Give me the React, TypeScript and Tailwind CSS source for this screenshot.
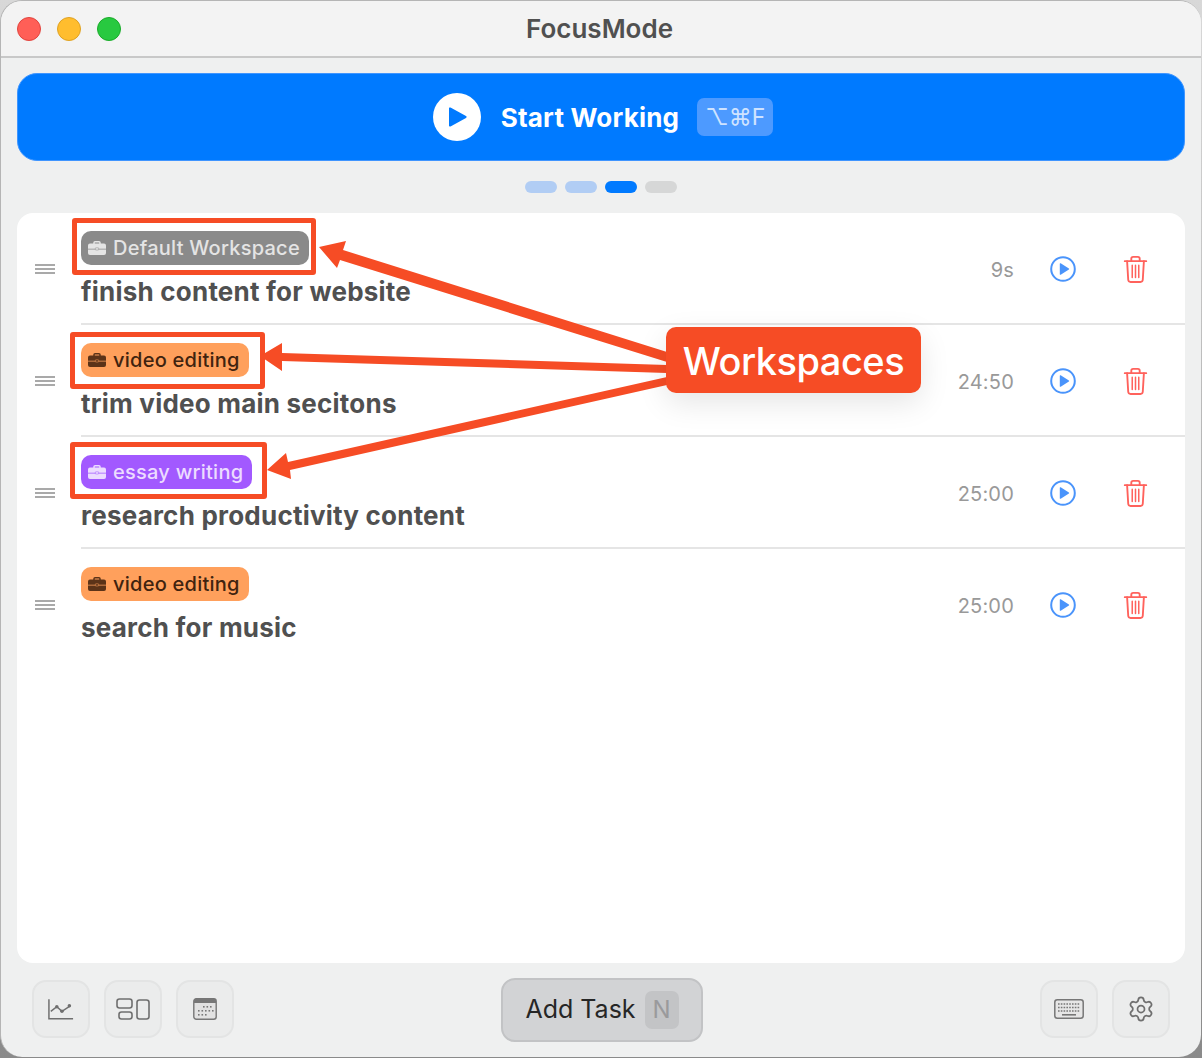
import React from "react";
import { Settings } from "lucide-react";

function Brief({ color, cut }: { color: string; cut: string }) {
  return (
    <svg width="18" height="14" viewBox="0 0 18 14" className="shrink-0">
      <path d="M6 3V1.8a1 1 0 0 1 1-1h4a1 1 0 0 1 1 1V3" fill="none" stroke={color} strokeWidth="1.5" />
      <path d="M2 2.6h14a2 2 0 0 1 2 2v3.2H0V4.6a2 2 0 0 1 2-2z" fill={color} />
      <path d="M0 8.4h18V12a2 2 0 0 1-2 2H2a2 2 0 0 1-2-2z" fill={color} />
      <rect x="7.4" y="6.8" width="3.2" height="2.2" rx="0.4" fill={color} stroke={cut} strokeWidth="0.5" />
    </svg>
  );
}

function Trash() {
  return (
    <svg width="25" height="28" viewBox="0 0 26 30" fill="none" stroke="#ff625c" strokeWidth="2" strokeLinecap="round" strokeLinejoin="round">
      <path d="M1.5 5.5h23" />
      <path d="M8.5 5V3a2 2 0 0 1 2-2h5a2 2 0 0 1 2 2v2" />
      <path d="M4 5.5l1.2 20a2.5 2.5 0 0 0 2.5 2.3h10.6a2.5 2.5 0 0 0 2.5-2.3l1.2-20" />
      <path d="M9.5 10v13M13 10v13M16.5 10v13" strokeWidth="1.6" />
    </svg>
  );
}

function RowPlay() {
  return (
    <svg width="26" height="26" viewBox="0 0 26 26">
      <circle cx="13" cy="13" r="11.8" fill="none" stroke="#4a94fb" strokeWidth="2" />
      <path d="M9.8 7.8v10.4a.6.6 0 0 0 .9.5l8.2-5.2a.6.6 0 0 0 0-1l-8.2-5.2a.6.6 0 0 0-.9.5z" fill="#4a94fb" />
    </svg>
  );
}

function Grip() {
  return (
    <div className="flex w-[20px] flex-col gap-[2px]">
      <div className="h-[2px] bg-[#a9a9a9]" />
      <div className="h-[2px] bg-[#a9a9a9]" />
      <div className="h-[2px] bg-[#a9a9a9]" />
    </div>
  );
}

const rows = [
  { tag: "Default Workspace", bg: "bg-[#8a8a8a]", fg: "text-[#e4e4e4]", ic: "#e4e4e4", cut: "#8a8a8a", title: "finish content for website", time: "9s" },
  { tag: "video editing", bg: "bg-[#ffa05c]", fg: "text-[#40230f]", ic: "#5c3318", cut: "#ffa05c", title: "trim video main secitons", time: "24:50" },
  { tag: "essay writing", bg: "bg-[#a259ff]", fg: "text-[#ecdcff]", ic: "#ecdcff", cut: "#a259ff", title: "research productivity content", time: "25:00" },
  { tag: "video editing", bg: "bg-[#ffa05c]", fg: "text-[#40230f]", ic: "#5c3318", cut: "#ffa05c", title: "search for music", time: "25:00" },
];

function Tool({ children }: { children: React.ReactNode }) {
  return (
    <div className="flex h-[58px] w-[58px] items-center justify-center rounded-[14px] border-2 border-[#e3e4e4] bg-[#ebecec]">
      {children}
    </div>
  );
}

export default function App() {
  return (
    <div className="relative h-[1058px] w-[1202px] overflow-hidden bg-linear-to-b from-[#d8d8d8] to-[#8a8a8a] font-['Inter',sans-serif]">
      <div className="flex h-[1057px] w-[1201px] flex-col overflow-hidden rounded-[22px] border border-[#b5b5b5] border-b-0 border-r-0 bg-[#eff0f0]">
        <div className="flex h-[57px] shrink-0 items-center border-b-2 border-[#c8c8c8] bg-[#f3f3f3] pl-[16px]">
          <div className="flex gap-[16px]">
            <div className="h-[24px] w-[24px] rounded-full border border-[#e0443e] bg-[#ff5f57]" />
            <div className="h-[24px] w-[24px] rounded-full border border-[#dea123] bg-[#ffbd2e]" />
            <div className="h-[24px] w-[24px] rounded-full border border-[#1aab29] bg-[#28c940]" />
          </div>
          <div className="ml-[405px] text-[26px] font-semibold text-[#505050]">FocusMode</div>
        </div>

        <div className="mx-[16px] mt-[15px] flex h-[88px] shrink-0 items-center justify-center rounded-[20px] border border-[#3f95ff] bg-[#007aff] pl-[4px]">
          <div className="flex h-[48px] w-[48px] items-center justify-center rounded-full bg-white">
            <svg width="18" height="20" viewBox="0 0 18 20" className="ml-[2px]">
              <path d="M0 1.5v17a1 1 0 0 0 1.5.9l15.5-8.5a1 1 0 0 0 0-1.8L1.5.6A1 1 0 0 0 0 1.5z" fill="#007aff" />
            </svg>
          </div>
          <div className="ml-[20px] pt-[2px] text-[26px] font-bold leading-none tracking-[0.2px] text-white">Start Working</div>
          <div className="ml-[18px] flex h-[38px] w-[76px] items-center justify-center rounded-[7px] bg-[#4d9aff] text-[23px] leading-none text-[#cfe3ff]">⌥⌘F</div>
        </div>

        <div className="mt-[20px] flex shrink-0 justify-center gap-[8px] pr-[1px]">
          <div className="h-[12px] w-[32px] rounded-full bg-[#b1cdf4]" />
          <div className="h-[12px] w-[32px] rounded-full bg-[#b1cdf4]" />
          <div className="h-[12px] w-[32px] rounded-full bg-[#007aff]" />
          <div className="h-[12px] w-[32px] rounded-full bg-[#d6d7d7]" />
        </div>

        <div className="mx-[16px] mt-[20px] h-[750px] shrink-0 rounded-[16px] bg-white">
          {rows.map((r, i) => (
            <div key={i} className="flex h-[112px] items-center">
              <div className="flex w-[64px] shrink-0 justify-center pr-[8px]">
                <Grip />
              </div>
              <div className={`flex h-[112px] flex-1 items-center border-b-2 ${i < 3 ? "border-[#e5e5e5]" : "border-transparent"}`}>
                <div className="flex-1 pt-[4px]">
                  <div className={`flex h-[34px] w-fit items-center gap-[7px] rounded-[10px] pl-[7px] pr-[9px] text-[20px] font-medium leading-none tracking-[0.25px] ${r.bg} ${r.fg}`}>
                    <Brief color={r.ic} cut={r.cut} />
                    <span>{r.tag}</span>
                  </div>
                  <div className="mt-[9px] text-[26px] font-bold leading-[36px] tracking-[0.22px] text-[#505050]">{r.title}</div>
                </div>
                <div className="w-[100px] pt-[3px] text-right text-[20px] tracking-[0.2px] text-[#999999]">{r.time}</div>
                <div className="ml-[36px] flex w-[26px] justify-center pt-[2px]"><RowPlay /></div>
                <div className="ml-[46px] mr-[37px] flex w-[26px] justify-center pt-[4px]"><Trash /></div>
              </div>
            </div>
          ))}
        </div>

        <div className="mx-[31px] mt-[15px] flex shrink-0 items-start justify-between">
          <div className="flex gap-[14px] pt-[2px]">
            <Tool>
              <svg width="26" height="23" viewBox="0 0 28 24" fill="none" stroke="#6f6f6f" strokeWidth="1.6">
                <path d="M1 1v21h26" />
                <path d="M3 14l6.5-5 5.5 5 9-6" />
                <circle cx="9.5" cy="9" r="1.9" fill="#6f6f6f" stroke="none" />
                <circle cx="15" cy="14" r="1.9" fill="#6f6f6f" stroke="none" />
                <circle cx="23" cy="8" r="1.9" fill="#6f6f6f" stroke="none" />
              </svg>
            </Tool>
            <Tool>
              <svg width="34" height="22" viewBox="0 0 34 22" fill="none" stroke="#6f6f6f" strokeWidth="1.6">
                <rect x="1" y="1" width="15" height="9" rx="2.5" />
                <rect x="3" y="14" width="13" height="7" rx="2.5" />
                <rect x="21" y="2" width="12" height="19" rx="2.5" />
              </svg>
            </Tool>
            <Tool>
              <svg width="24" height="22" viewBox="0 0 24 22">
                <rect x="0.8" y="0.8" width="22.4" height="20.4" rx="2.5" fill="#e2e2e2" stroke="#777" strokeWidth="1.4" />
                <path d="M1 3a2.5 2.5 0 0 1 2.5-2.5h17A2.5 2.5 0 0 1 23 3v2H1z" fill="#777" />
                <g fill="#777">
                  <rect x="10" y="8" width="1.6" height="1.6" /><rect x="13.5" y="8" width="1.6" height="1.6" /><rect x="17" y="8" width="1.6" height="1.6" />
                  <rect x="5" y="12" width="1.6" height="1.6" /><rect x="8.5" y="12" width="1.6" height="1.6" /><rect x="12" y="12" width="1.6" height="1.6" /><rect x="15.5" y="12" width="1.6" height="1.6" /><rect x="19" y="12" width="1.6" height="1.6" />
                  <rect x="5" y="16" width="1.6" height="1.6" /><rect x="8.5" y="16" width="1.6" height="1.6" /><rect x="12" y="16" width="1.6" height="1.6" />
                </g>
              </svg>
            </Tool>
          </div>
          <div className="ml-[-70px] flex h-[64px] w-[202px] items-center justify-center gap-[9px] rounded-[14px] border-2 border-[#c2c3c5] bg-[#d2d3d5] text-[25px] text-[#262626]">
            <span>Add Task</span>
            <span className="flex h-[38px] w-[34px] items-center justify-center rounded-[7px] bg-[#c3c4c6] text-[24px] text-[#9a9a9c]">N</span>
          </div>
          <div className="flex gap-[14px] pt-[2px]">
            <Tool>
              <svg width="30" height="20" viewBox="0 0 30 20">
                <rect x="0.8" y="0.8" width="28.4" height="18.4" rx="2.5" fill="#e6e6e6" stroke="#777" strokeWidth="1.5" />
                <g stroke="#777" strokeWidth="1.6" strokeDasharray="1.6 1.2">
                  <path d="M4 5h22M4 8.5h22M4 12h22" />
                </g>
                <path d="M8 15.8h14" stroke="#777" strokeWidth="1.6" />
              </svg>
            </Tool>
            <Tool>
              <Settings size={28} color="#6f6f6f" strokeWidth={1.5} />
            </Tool>
          </div>
        </div>
      </div>

      <div className="absolute left-[72px] top-[218px] h-[57px] w-[244px] rounded-[3px] border-[5px] border-[#f64c25]" />
      <div className="absolute left-[70px] top-[332px] h-[57px] w-[195px] rounded-[3px] border-[5px] border-[#f64c25]" />
      <div className="absolute left-[70px] top-[442px] h-[57px] w-[197px] rounded-[3px] border-[5px] border-[#f64c25]" />

      <svg className="absolute left-0 top-0" width="1202" height="1058" viewBox="0 0 1202 1058" fill="#f64c25">
        <polygon points="319,247 346,241 343,250 667,352 667,362 340,260 337,268" />
        <polygon points="260,356 282,343 282,353 667,365 667,373 282,361 282,371" />
        <polygon points="267,470 286,453 288,462 667,377 667,385 290,470 291,479" />
      </svg>

      <div className="absolute left-[666px] top-[327px] flex h-[66px] w-[255px] items-center justify-center rounded-[10px] bg-[#f64c25] pt-[2px] text-[38px] font-medium leading-none tracking-[-0.5px] text-white shadow-[0_10px_30px_rgba(0,0,0,0.1)]">
        Workspaces
      </div>
    </div>
  );
}
